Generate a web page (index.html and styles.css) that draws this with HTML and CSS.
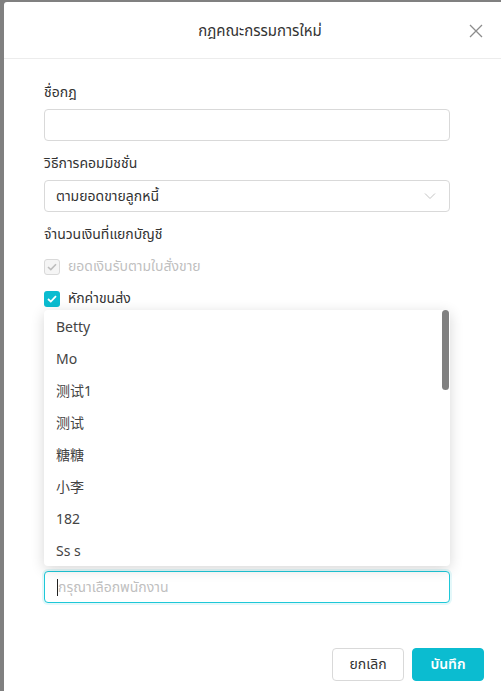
FILE: index.html
```html
<!DOCTYPE html>
<html lang="th">
<head>
<meta charset="utf-8">
<title>กฎคณะกรรมการใหม่</title>
<link rel="stylesheet" href="styles.css">
</head>
<body>
<div class="modal">
  <div class="modal-header">
    <div class="modal-title">กฎคณะกรรมการใหม่</div>
    <button class="close" aria-label="close">
      <svg width="14" height="14" viewBox="0 0 14 14"><path d="M1 1L13 13M13 1L1 13" stroke="#8c8c8c" stroke-width="1.3" fill="none"/></svg>
    </button>
  </div>
  <div class="modal-body">
    <div class="form">
      <div class="field">
        <div class="label">ชื่อกฎ</div>
        <div class="input"></div>
      </div>
      <div class="field">
        <div class="label">วิธีการคอมมิชชั่น</div>
        <div class="input select">
          <span class="value">ตามยอดขายลูกหนี้</span>
          <svg class="chev" width="12" height="8" viewBox="0 0 12 8"><path d="M1 1.5L6 6.5L11 1.5" stroke="#c4c4c4" stroke-width="1" fill="none"/></svg>
        </div>
      </div>
      <div class="label">จำนวนเงินที่แยกบัญชี</div>
      <div class="checks">
        <label class="check disabled">
          <span class="box"><svg width="10" height="8" viewBox="0 0 10 8"><path d="M1 4L3.8 6.6L9 1.2" stroke="#bdbdbd" stroke-width="1.6" fill="none"/></svg></span>
          <span>ยอดเงินรับตามใบสั่งขาย</span>
        </label>
        <label class="check on">
          <span class="box"><svg width="10" height="8" viewBox="0 0 10 8"><path d="M1 4L3.8 6.6L9 1.2" stroke="#fff" stroke-width="1.8" fill="none"/></svg></span>
          <span>หักค่าขนส่ง</span>
        </label>
      </div>
      <div class="picker">
        <div class="dropdown">
          <div class="opt">Betty</div>
          <div class="opt">Mo</div>
          <div class="opt">测试1</div>
          <div class="opt">测试</div>
          <div class="opt">糖糖</div>
          <div class="opt">小李</div>
          <div class="opt">182</div>
          <div class="opt">Ss s</div>
          <div class="thumb"></div>
        </div>
        <div class="input focus"><span class="caret"></span><span class="ph">กรุณาเลือกพนักงาน</span></div>
      </div>
    </div>
  </div>
  <div class="modal-footer">
    <button class="btn">ยกเลิก</button>
    <button class="btn primary">บันทึก</button>
  </div>
</div>
</body>
</html>
```
FILE: styles.css
```css
* { box-sizing: border-box; }
html, body { margin: 0; height: 100%; }
body {
  background: #808080;
  overflow: hidden;
  font-family: "Noto Sans Thai", "Noto Sans", "Segoe UI", "DejaVu Sans", "Noto Sans CJK SC", sans-serif;
  font-size: 14px;
  color: #333;
  padding: 2px 0 0 4px;
}
.modal {
  width: 512px;
  height: 700px;
  background: #fff;
  border-radius: 3px 0 0 0;
  display: flex;
  flex-direction: column;
}
.modal-header {
  height: 57px;
  padding-top: 2px;
  border-bottom: 1px solid #ececec;
  display: flex;
  align-items: center;
  justify-content: center;
  position: relative;
}
.modal-title { font-size: 15px; color: #333; }
.close {
  position: absolute;
  right: 33px;
  top: 22px;
  border: 0;
  background: none;
  padding: 0;
  width: 14px;
  height: 14px;
  display: flex;
}
.modal-body { padding: 23px 0 0 40px; }
.form { width: 406px; display: flex; flex-direction: column; }
.field { margin-bottom: 12px; }
.label { line-height: 22px; margin-bottom: 5px; color: #333; }
.input {
  height: 32px;
  border: 1px solid #d9d9d9;
  border-radius: 4px;
  background: #fff;
  display: flex;
  align-items: center;
  padding: 0 11px;
}
.select { justify-content: space-between; }
.select .value { color: #333; padding-top: 1px; }
.chev { margin-right: 2px; }
.checks { display: flex; flex-direction: column; gap: 10px; margin-top: 5px; }
.check { display: flex; align-items: center; gap: 8px; line-height: 22px; }
.box {
  width: 16px; height: 16px;
  border-radius: 3px;
  display: flex; align-items: center; justify-content: center;
}
.check.disabled { color: #bfbfbf; }
.check.disabled .box { background: #f5f5f5; border: 1px solid #d9d9d9; }
.check.on .box { background: #0bbcd0; }
.picker { position: relative; margin-top: 261px; }
.dropdown {
  position: absolute;
  left: 0; right: 0;
  bottom: calc(100% + 5px);
  background: #fff;
  border-radius: 4px;
  box-shadow: 0 3px 14px rgba(0,0,0,0.16);
  padding: 0;
  z-index: 2;
}
.opt { height: 32px; line-height: 29px; padding: 3px 12px 0; color: #444; }
.thumb {
  position: absolute;
  right: 1px; top: 0;
  width: 7px; height: 80px;
  background: #808080;
  border-radius: 4px;
}
.input.focus {
  border-color: #1ec8d8;
  box-shadow: 0 0 0 2px rgba(30,200,216,0.12);
  padding-left: 12px;
}
.caret { width: 1px; height: 17px; background: #222; }
.ph { color: #bfbfbf; }
.modal-footer {
  margin-top: 45px;
  width: 480px;
  display: flex;
  justify-content: flex-end;
  gap: 8px;
}
.btn {
  height: 33px;
  width: 72px;
  border: 1px solid #d9d9d9;
  background: #fff;
  border-radius: 4px;
  font: inherit;
  font-size: 14px;
  color: #333;
  padding: 0;
}
.btn.primary { background: #0bbcd0; border-color: #0bbcd0; color: #fff; font-weight: 600; }
```
